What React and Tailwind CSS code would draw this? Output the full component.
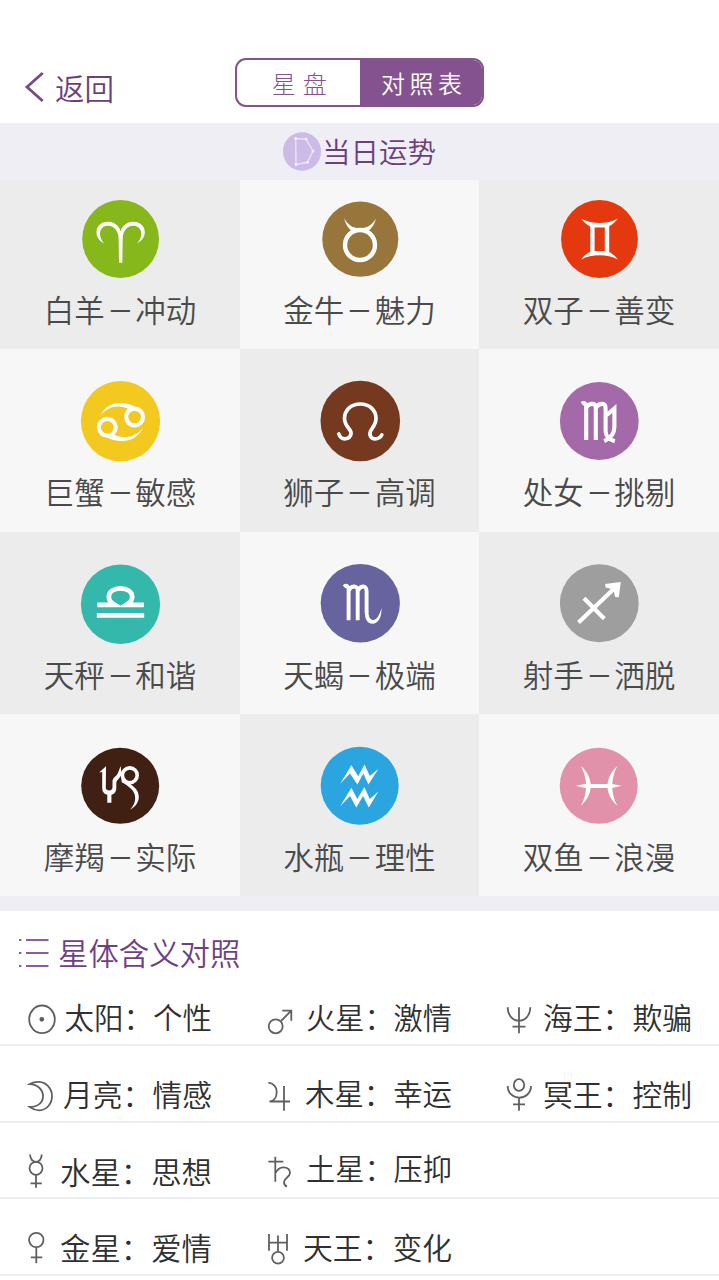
import React, { useState } from 'react';

const signs = [
  {
    name: '白羊', trait: '冲动', color: '#86b81b', cx: 42.6, cy: 42, rx: 38.4, ry: 39,
    glyph: (
      <path fill="#fff" d="M26.3 46.5C20.5 43.5 18.2 39 18.5 34.5C19 27.5 25.5 24.3 31 24.8C37 25.3 41.5 29.5 42.6 34.5C43.8 29.5 48.3 25.3 54.3 24.8C59.8 24.3 66.2 27.5 66.8 34.5C67 39 64.7 43.5 59 46.5C61.8 43 63.4 40 63.3 36.3C63 31 59 28.6 54.6 28.8C49.5 29.2 45 33.5 44.7 41L44.3 65.8H41L40.6 41C40.3 33.5 35.8 29.2 30.6 28.8C26.2 28.6 22.3 31 22 36.3C21.9 40 23.4 43 26.3 46.5Z" />
    ),
  },
  {
    name: '金牛', trait: '魅力', color: '#98753b', cx: 42.3, cy: 42.2, rx: 38, ry: 37.6,
    glyph: (
      <>
        <circle cx="42" cy="48" r="15" stroke="#fff" strokeWidth="4.4" />
        <path fill="#fff" d="M26.3 21.3C29.5 27.5 34 31.2 42 31.2S54.5 27.5 57.8 21.5C56.5 28 53 32.5 48.5 35H35.5C31 32.5 27.5 28 26.3 21.3Z" />
      </>
    ),
  },
  {
    name: '双子', trait: '善变', color: '#e4380e', cx: 42.5, cy: 42, rx: 38.4, ry: 39,
    glyph: (
      <g fill="#fff">
        <path d="M24.2 21.8C35 27.5 50 27.5 60.8 21.8C57 26.5 53 29.3 49.5 30.5H35.5C32 29.3 28 26.5 24.2 21.8Z" />
        <path d="M24.2 62.4C35 57 50 57 60.8 62.4C57 57.5 53 55 49.5 54H35.5C32 55 28 57.5 24.2 62.4Z" />
        <path d="M33.3 28h4.3v28h-4.3zM47.8 28h4.4v28h-4.4z" />
      </g>
    ),
  },
  {
    name: '巨蟹', trait: '敏感', color: '#f3c81f', cx: 42.5, cy: 42.2, rx: 39.6, ry: 40.2,
    glyph: (
      <>
        <circle cx="29.3" cy="48.3" r="8.4" stroke="#fff" strokeWidth="4.2" />
        <circle cx="56.6" cy="38" r="8.4" stroke="#fff" strokeWidth="4.2" />
        <path fill="#fff" d="M22.5 36.5C26 28 34 23.7 43 23.9C49 24 54 25.5 59 29L51 30.5C41 25 30 27.5 22.5 36.5Z" />
        <path fill="#fff" d="M65 49C61 57.5 53 62 44 62C38 62 32 60.5 27.5 57.5L36 55.5C46 61 57.5 58 65 49Z" />
      </>
    ),
  },
  {
    name: '狮子', trait: '高调', color: '#75391f', cx: 42.3, cy: 42, rx: 39.8, ry: 40.2,
    glyph: (
      <path stroke="#fff" strokeWidth="3.7" strokeLinecap="round" d="M20.8 55C22 58.5 24 59.8 26.8 59.8C32 59.8 34.5 55 32 51C29.5 48 26.5 45 26.5 39.5C26.5 31 33 25 42.3 25S58 31 58 39.5C58 45 55 48 52.8 51.5C50.5 56 53 59.8 57 59.8C60.5 59.8 62.5 58.5 63.8 56" />
    ),
  },
  {
    name: '处女', trait: '挑剔', color: '#a469a9', cx: 42.3, cy: 42, rx: 39.4, ry: 39,
    glyph: (
      <path stroke="#fff" strokeWidth="4.1" d="M24.8 24.8C27.5 23 29.2 25 29.2 28V61M29.2 29C31 24.5 38.8 22.5 38.8 29V61M38.8 29C41 24.5 48.6 22.5 48.6 29V52C48.6 57 52 60.5 57.8 62.2M48.6 37L57.4 29.5V48C57.4 55 53 59.5 47.2 62.2" />
    ),
  },
  {
    name: '天秤', trait: '和谐', color: '#35b8ac', cx: 42.5, cy: 42.2, rx: 39.6, ry: 39.8,
    glyph: (
      <path stroke="#fff" strokeWidth="4.7" d="M18.8 53.5H66.2M19.3 42.8H36.5C32.5 40.5 30.8 37.5 30.8 34.8C30.8 29.5 36 26.4 42.5 26.4S54.2 29.5 54.2 34.8C54.2 37.5 52.5 40.5 48.5 42.8H65.8" />
    ),
  },
  {
    name: '天蝎', trait: '极端', color: '#66639f', cx: 42.3, cy: 41.2, rx: 39.6, ry: 39.2,
    glyph: (
      <>
        <path stroke="#fff" strokeWidth="3.9" d="M26 24.8C28.8 22.5 30.6 25 30.6 28V58.3M30.6 29C32.5 23.5 39.7 22.5 39.7 29V58.3M39.7 29C42 23.5 48.6 22.5 48.6 29V50" />
        <path fill="#fff" d="M46.7 49C46.8 57 49 61.7 54.5 61.7C60 61.7 63.8 55.5 63.5 46C61.5 53 59 58 55.3 58C51.5 58 50.5 54 50.5 49Z" />
      </>
    ),
  },
  {
    name: '射手', trait: '洒脱', color: '#9e9e9e', cx: 42.3, cy: 41.2, rx: 39.4, ry: 39,
    glyph: (
      <>
        <path stroke="#fff" strokeWidth="4.2" d="M21.5 60.5L58.5 25.2M27 36.2L47.3 56.8" />
        <path fill="#fff" d="M63.8 19.9L48 22L48.7 25.5L54.5 27L56.8 29.5L58.2 35L61.8 35.2Z" />
      </>
    ),
  },
  {
    name: '摩羯', trait: '实际', color: '#402012', cx: 42.2, cy: 41.8, rx: 39, ry: 38,
    glyph: (
      <>
        <path fill="#fff" d="M21.2 28.5L28 22.2L27.8 44C28 47.5 34.8 47.5 34.5 43V37C35 33 38 33 40 29L42.6 22L43.5 29C43.5 34 38.5 35 38.3 39V44C38.2 48 36 50.3 33.4 50.8V58.8H29.3V50.8C26 50 24.2 48 24.2 44V28Z" />
        <ellipse cx="51.8" cy="31.3" rx="7.4" ry="7.4" stroke="#fff" strokeWidth="3.6" />
        <path fill="#fff" d="M43.6 34C50 39.5 61 43 60.8 53C60.7 58.5 57 63 52.2 65.5C56 61.5 57.4 57.5 57.2 53.5C57 46 50 42 43.6 38Z" />
      </>
    ),
  },
  {
    name: '水瓶', trait: '理性', color: '#2aa5e0', cx: 41.7, cy: 41.7, rx: 39, ry: 39,
    glyph: (
      <g fill="#fff">
        <path d="M22.2 39.8L33.4 21.3L40.3 32.3L46.5 20.5L51.8 32L60.4 25L50.4 40.5L45.3 29.5L39.4 40.5L32 29.5Z" />
        <path d="M22.2 62.2L33.4 43.8L39.3 55L46.3 43L51.8 55L60.4 47.5L50.8 63.5L45.1 52L38.3 63.5L32 52Z" />
      </g>
    ),
  },
  {
    name: '双鱼', trait: '浪漫', color: '#e191a9', cx: 41.7, cy: 41.8, rx: 39, ry: 38,
    glyph: (
      <g fill="#fff">
        <path d="M24 22C37 34 37 50 24 61.8C30.8 49 30.8 35 24 22Z" />
        <path d="M60.3 22C47.3 34 47.3 50 60.3 61.8C53.5 49 53.5 35 60.3 22Z" />
        <path d="M18.5 41.8L28 40H55L64.6 41.8L55 43.9H28Z" />
      </g>
    ),
  },
];

const planets = [
  [
    { label: '太阳：个性', text: 'text-[29.5px] pb-[3px]', icon: <><ellipse cx="18" cy="20.3" rx="12.8" ry="13.8" /><circle cx="17.8" cy="20.3" r="1.5" fill="#555" /></> },
    { label: '火星：激情', text: 'text-[29.2px] pb-[3px]', icon: <><circle cx="11.7" cy="27.3" r="7" /><path d="M17 22L27.3 11.7M18.3 11.7H27.3V21.7" /></> },
    { label: '海王：欺骗', text: 'text-[29.8px] pb-[3px]', icon: <path d="M4.7 8.3C4.7 16.5 10 21.7 16 21.7S27.3 16.5 27.3 8.3M16 8.3V34.3M9.5 27.7H22.5" /> },
  ],
  [
    { label: '月亮：情感', text: 'text-[29.8px] pb-[3px]', icon: <path d="M5.8 8C9 6.2 12 5.8 15 5.9C22.5 6.3 28 12.5 28 20.2S22.5 34 15.5 34.3C12 34.4 8.5 33 5.8 31C13.5 31 19 27 19 20.2S13.5 8.5 5.8 8Z" /> },
    { label: '木星：幸运', text: 'text-[29.4px] pb-1', icon: <path d="M4.3 6.7C9.5 7.2 12.7 11 12.7 15.7C12.7 20.5 10.5 25.2 5.5 25.5H26M20 10V34.7" /> },
    { label: '冥王：控制', text: 'text-[29.8px] pb-[3px]', icon: <><ellipse cx="16" cy="9" rx="5.2" ry="5.9" /><path d="M4.7 10C4.7 17 10 21.7 16.2 21.7S28 17 28 10M16 21.7V34.7M10 28.3H22" /></> },
  ],
  [
    { label: '水星：思想', text: 'text-[30.4px] pb-px', icon: <><circle cx="12" cy="16.3" r="6.5" /><path d="M6 2.5C6.5 7.5 9 9.8 12 9.8S17.3 7.5 17.8 2.5M12 22.8V35.7M6.5 31.3H17.8" /></> },
    { label: '土星：压抑', text: 'text-[29.2px] pb-[5px]', icon: <path d="M11.3 4.7V29.7M4.3 9.7H19.3M11.3 21.3C13.5 17 16.5 15.3 19.3 15.3C23.5 15.3 26 17.5 26 21C26 25 20 26 20 30C20 32.5 21 34 23 34.7" /> },
    null,
  ],
  [
    { label: '金星：爱情', text: 'text-[30.4px] pb-[2px]', icon: <><circle cx="12.3" cy="11" r="7.2" /><path d="M12.3 18.3V34.3M6.8 28.3H18.3" /></> },
    { label: '天王：变化', text: 'text-[29.8px] pb-[3px]', icon: <><circle cx="14" cy="28.7" r="5.9" /><path d="M5 5V21.7M23 5V21.7M5 13.7H23M14 6.5V22.5" /></> },
    null,
  ],
];

function SignCell({ sign, index }) {
  const firstRow = index < 3;
  return (
    <div className={`flex flex-col items-center ${firstRow ? 'pt-[17px]' : 'pt-[30px]'} ${index % 2 === 0 ? 'bg-[#ececec]' : 'bg-[#f7f7f7]'}`}>
      <svg width="84" height="84" viewBox="0 0 84 84" fill="none">
        <ellipse cx={sign.cx} cy={sign.cy} rx={sign.rx} ry={sign.ry} fill={sign.color} />
        {sign.glyph}
      </svg>
      <span className="mt-2 text-[30.5px] leading-10 whitespace-nowrap text-[#4a4a4a]">
        {sign.name}<span className="inline-block scale-x-[0.86]">－</span>{sign.trait}
      </span>
    </div>
  );
}

function PlanetItem({ item, first }) {
  return (
    <div className={`flex items-end justify-between pl-6 pb-[5px] ${first ? 'pr-7' : 'pr-[27px]'}`}>
      <svg className="shrink-0" width="32" height="40" viewBox="0 0 32 40" fill="none" stroke="#606060" strokeWidth="1.8">
        {item.icon}
      </svg>
      <span className={`leading-10 whitespace-nowrap text-[#303030] ${item.text}`}>{item.label}</span>
    </div>
  );
}

export default function App() {
  const [tab, setTab] = useState('table');

  return (
    <div className="w-full h-[1280px] overflow-hidden bg-white font-[350] font-['Noto_Sans_CJK_SC',sans-serif]">
      {/* Header */}
      <header className="h-[123px] grid grid-cols-[235px_249px_1fr] pt-[58px]">
        <button className="flex h-[58px] items-center pl-6 text-[29.5px] text-[#6b3f7b]">
          <svg className="mr-[10px]" width="21" height="32" viewBox="0 0 21 32" fill="none" stroke="#77498a" strokeWidth="2.8">
            <path d="M18.7 2L3 16L18.7 30" />
          </svg>
          返回
        </button>
        <div className="flex h-[49px] overflow-hidden rounded-[11px] border-2 border-[#84538f]">
          <button onClick={() => setTab('chart')} className={`w-1/2 pl-[9px] font-light text-[24px] leading-[44px] tracking-[7px] ${tab === 'chart' ? 'bg-[#84538f] text-white' : 'text-[#84538f]'}`}>星盘</button>
          <button onClick={() => setTab('table')} className={`w-1/2 pl-1.5 text-[24px] leading-[44px] tracking-[4.5px] ${tab === 'table' ? 'bg-[#84538f] text-white' : 'text-[#84538f]'}`}>对照表</button>
        </div>
      </header>

      {/* Daily fortune title */}
      <div className="flex h-[57px] items-center justify-center bg-[#eeeef4] text-[28.5px] text-[#6b3f7b]">
        <svg className="mr-px" width="38" height="39" viewBox="0 0 38 39" fill="none">
          <ellipse cx="19" cy="19.5" rx="19" ry="19.3" fill="#ccbae7" />
          <path d="M12.7 6.5L23 7.2L30 19L24.5 30.3L13 32.5Z" stroke="#ebe2f8" strokeWidth="1.4" />
          <g fill="#f3edfc">
            <circle cx="12.7" cy="6.5" r="1.4" />
            <circle cx="23" cy="7.2" r="1.4" />
            <circle cx="30" cy="19" r="1.5" />
            <circle cx="24.5" cy="30.3" r="1.4" />
            <circle cx="13" cy="32.5" r="1.4" />
          </g>
        </svg>
        当日运势
      </div>

      {/* Zodiac grid */}
      <section className="grid grid-cols-[240px_239px_240px] grid-rows-[169px_183px_182px_182px]">
        {signs.map((sign, i) => (
          <SignCell key={sign.name} sign={sign} index={i} />
        ))}
      </section>

      <div className="h-[15px] bg-[#eeeef4]" />

      {/* Planet meanings */}
      <section>
        <h2 className="flex h-[84px] items-center pl-[18px] text-[30.4px] font-[350] text-[#6f3f85]">
          <svg className="mr-[9px]" width="31" height="32" viewBox="0 0 31 32" fill="none" stroke="#8d5b9f" strokeWidth="1.8">
            <path d="M1 3H3.4M8 3H30.5M1 16H3.4M8 16H30.5M1 29H3.4M8 29H30.5" />
          </svg>
          星体含义对照
        </h2>
        <div className="grid grid-rows-[51px_77px_76px_77px]">
          {planets.map((row, i) => (
            <div key={i} className="grid grid-cols-[240px_239px_240px] items-end border-b-2 border-[#ededf2]">
              {row.map((item, col) => item && <PlanetItem key={item.label} item={item} first={col === 0} />)}
            </div>
          ))}
        </div>
      </section>
    </div>
  );
}
